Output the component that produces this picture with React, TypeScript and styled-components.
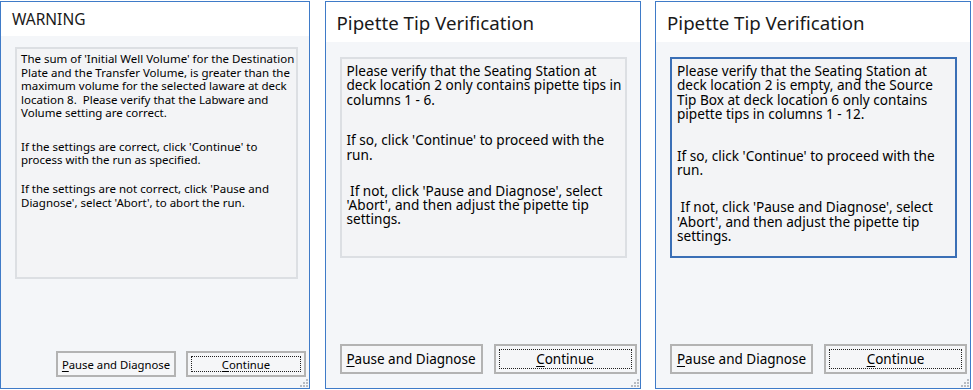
import { createGlobalStyle, styled } from 'styled-components';

type Size = 'sm' | 'lg';

interface DialogData {
  title: string;
  size: Size;
  focused?: boolean;
  gaps: number[];
  paragraphs: string[][];
}

const dialogs: DialogData[] = [
  {
    title: 'WARNING',
    size: 'sm',
    gaps: [0, 19.6, 15.4],
    paragraphs: [
      [
        "The sum of 'Initial Well Volume' for the Destination",
        'Plate and the Transfer Volume, is greater than the',
        'maximum volume for the selected laware at deck',
        'location 8.  Please verify that the Labware and',
        'Volume setting are correct.',
      ],
      ["If the settings are correct, click 'Continue' to", 'process with the run as specified.'],
      ["If the settings are not correct, click 'Pause and", "Diagnose', select 'Abort', to abort the run."],
    ],
  },
  {
    title: 'Pipette Tip Verification',
    size: 'lg',
    gaps: [0, 26, 21.6],
    paragraphs: [
      ['Please verify that the Seating Station at', 'deck location 2 only contains pipette tips in', 'columns 1 - 6.'],
      ["If so, click 'Continue' to proceed with the", 'run.'],
      ["\u00a0If not, click 'Pause and Diagnose', select", "'Abort', and then adjust the pipette tip", 'settings.'],
    ],
  },
  {
    title: 'Pipette Tip Verification',
    size: 'lg',
    focused: true,
    gaps: [0, 27.4, 22.4],
    paragraphs: [
      [
        'Please verify that the Seating Station at',
        'deck location 2 is empty, and the Source',
        'Tip Box at deck location 6 only contains',
        'pipette tips in columns 1 - 12.',
      ],
      ["If so, click 'Continue' to proceed with the", 'run.'],
      ["\u00a0If not, click 'Pause and Diagnose', select", "'Abort', and then adjust the pipette tip", 'settings.'],
    ],
  },
];

export default function App() {
  return (
    <>
      <GlobalStyle />
      <Row>
        {dialogs.map((d, i) => (
          <Dialog key={i} $size={d.size}>
            <TitleBar $size={d.size}>{d.title}</TitleBar>
            <Body $size={d.size}>
              <MessageBox $size={d.size} $focused={d.focused}>
                {d.paragraphs.map((p, j) => (
                  <Paragraph key={j} $gap={d.gaps[j]}>
                    {p.map((line, k) => (
                      <Line key={k}>{line}</Line>
                    ))}
                  </Paragraph>
                ))}
              </MessageBox>
              <ButtonRow $size={d.size}>
                <Button $size={d.size}>
                  <Label>
                    <u>P</u>ause and Diagnose
                  </Label>
                </Button>
                <Button $size={d.size}>
                  <FocusRect>
                    <Label>
                      <u>C</u>ontinue
                    </Label>
                  </FocusRect>
                </Button>
              </ButtonRow>
            </Body>
            <Grip width='8' height='8' viewBox='0 0 8 8'>
              <rect x='6' y='0' width='2' height='2' fill='#b8bcc2' />
              <rect x='3' y='3' width='2' height='2' fill='#b8bcc2' />
              <rect x='6' y='3' width='2' height='2' fill='#b8bcc2' />
              <rect x='0' y='6' width='2' height='2' fill='#b8bcc2' />
              <rect x='3' y='6' width='2' height='2' fill='#b8bcc2' />
              <rect x='6' y='6' width='2' height='2' fill='#b8bcc2' />
            </Grip>
          </Dialog>
        ))}
      </Row>
    </>
  );
}

const GlobalStyle = createGlobalStyle`
  body {
    margin: 0;
    background: #ffffff;
    font-family: 'Noto Sans', 'Open Sans', sans-serif;
  }
`;

const Row = styled.div`
  display: flex;
  justify-content: space-between;
  width: 971px;
  padding-top: 1px;
`;

const Dialog = styled.div<{ $size: Size }>`
  position: relative;
  display: flex;
  flex-direction: column;
  box-sizing: border-box;
  width: ${(p) => (p.$size === 'sm' ? 310 : 316)}px;
  height: 388px;
  border: 1px solid #3f7bc8;
  background: #f4f6f9;
`;

const TitleBar = styled.div<{ $size: Size }>`
  display: flex;
  align-items: center;
  height: ${(p) => (p.$size === 'sm' ? 34 : 40)}px;
  padding-left: 11px;
  background: #ffffff;
  color: #1a1a1a;
  font-size: ${(p) => (p.$size === 'sm' ? 15.5 : 18.7)}px;
`;

const Body = styled.div<{ $size: Size }>`
  flex: 1;
  display: flex;
  flex-direction: column;
  padding: ${(p) => (p.$size === 'sm' ? '11px 2px 11px 14px' : '15px 2px 14px 14px')};
`;

const MessageBox = styled.div<{ $size: Size; $focused?: boolean }>`
  box-sizing: border-box;
  width: ${(p) => (p.$size === 'sm' ? 283 : 287)}px;
  height: ${(p) => (p.$size === 'sm' ? 232 : 201)}px;
  padding: ${(p) => (p.$size === 'sm' ? '3px 4px' : '5px 5px')};
  border: ${(p) => (p.$focused ? '2px solid #3a6fb6' : '2px solid #dcdfe3')};
  background: #f3f4f6;
  color: #000000;
  font-size: ${(p) => (p.$size === 'sm' ? 11.5 : 13.6)}px;
  line-height: ${(p) => (p.$size === 'sm' ? 13.6 : 14.4)}px;
  display: flex;
  flex-direction: column;
`;

const Paragraph = styled.div<{ $gap: number }>`
  display: flex;
  flex-direction: column;
  margin-top: ${(p) => p.$gap}px;
`;

const Line = styled.span`
  white-space: pre;
`;

const ButtonRow = styled.div<{ $size: Size }>`
  margin-top: auto;
  display: flex;
  justify-content: flex-end;
  gap: ${(p) => (p.$size === 'sm' ? 10 : 11)}px;
  padding-right: 1px;
`;

const Button = styled.div<{ $size: Size }>`
  box-sizing: border-box;
  display: flex;
  align-items: center;
  justify-content: center;
  width: ${(p) => (p.$size === 'sm' ? 120 : 144)}px;
  height: ${(p) => (p.$size === 'sm' ? 26 : 30)}px;
  padding: 3px;
  border: 2px solid #b3b3b3;
  background: #f5f6f8;
  color: #000000;
  font-size: ${(p) => (p.$size === 'sm' ? 11.3 : 13.5)}px;
`;

const Label = styled.span`
  white-space: nowrap;

  u {
    text-decoration-thickness: 1px;
    text-underline-offset: 2px;
  }
`;

const FocusRect = styled.span`
  flex: 1;
  align-self: stretch;
  display: flex;
  align-items: center;
  justify-content: center;
  border: 1px dotted #202020;
`;

const Grip = styled.svg`
  position: absolute;
  right: 1px;
  bottom: 1px;
`;
